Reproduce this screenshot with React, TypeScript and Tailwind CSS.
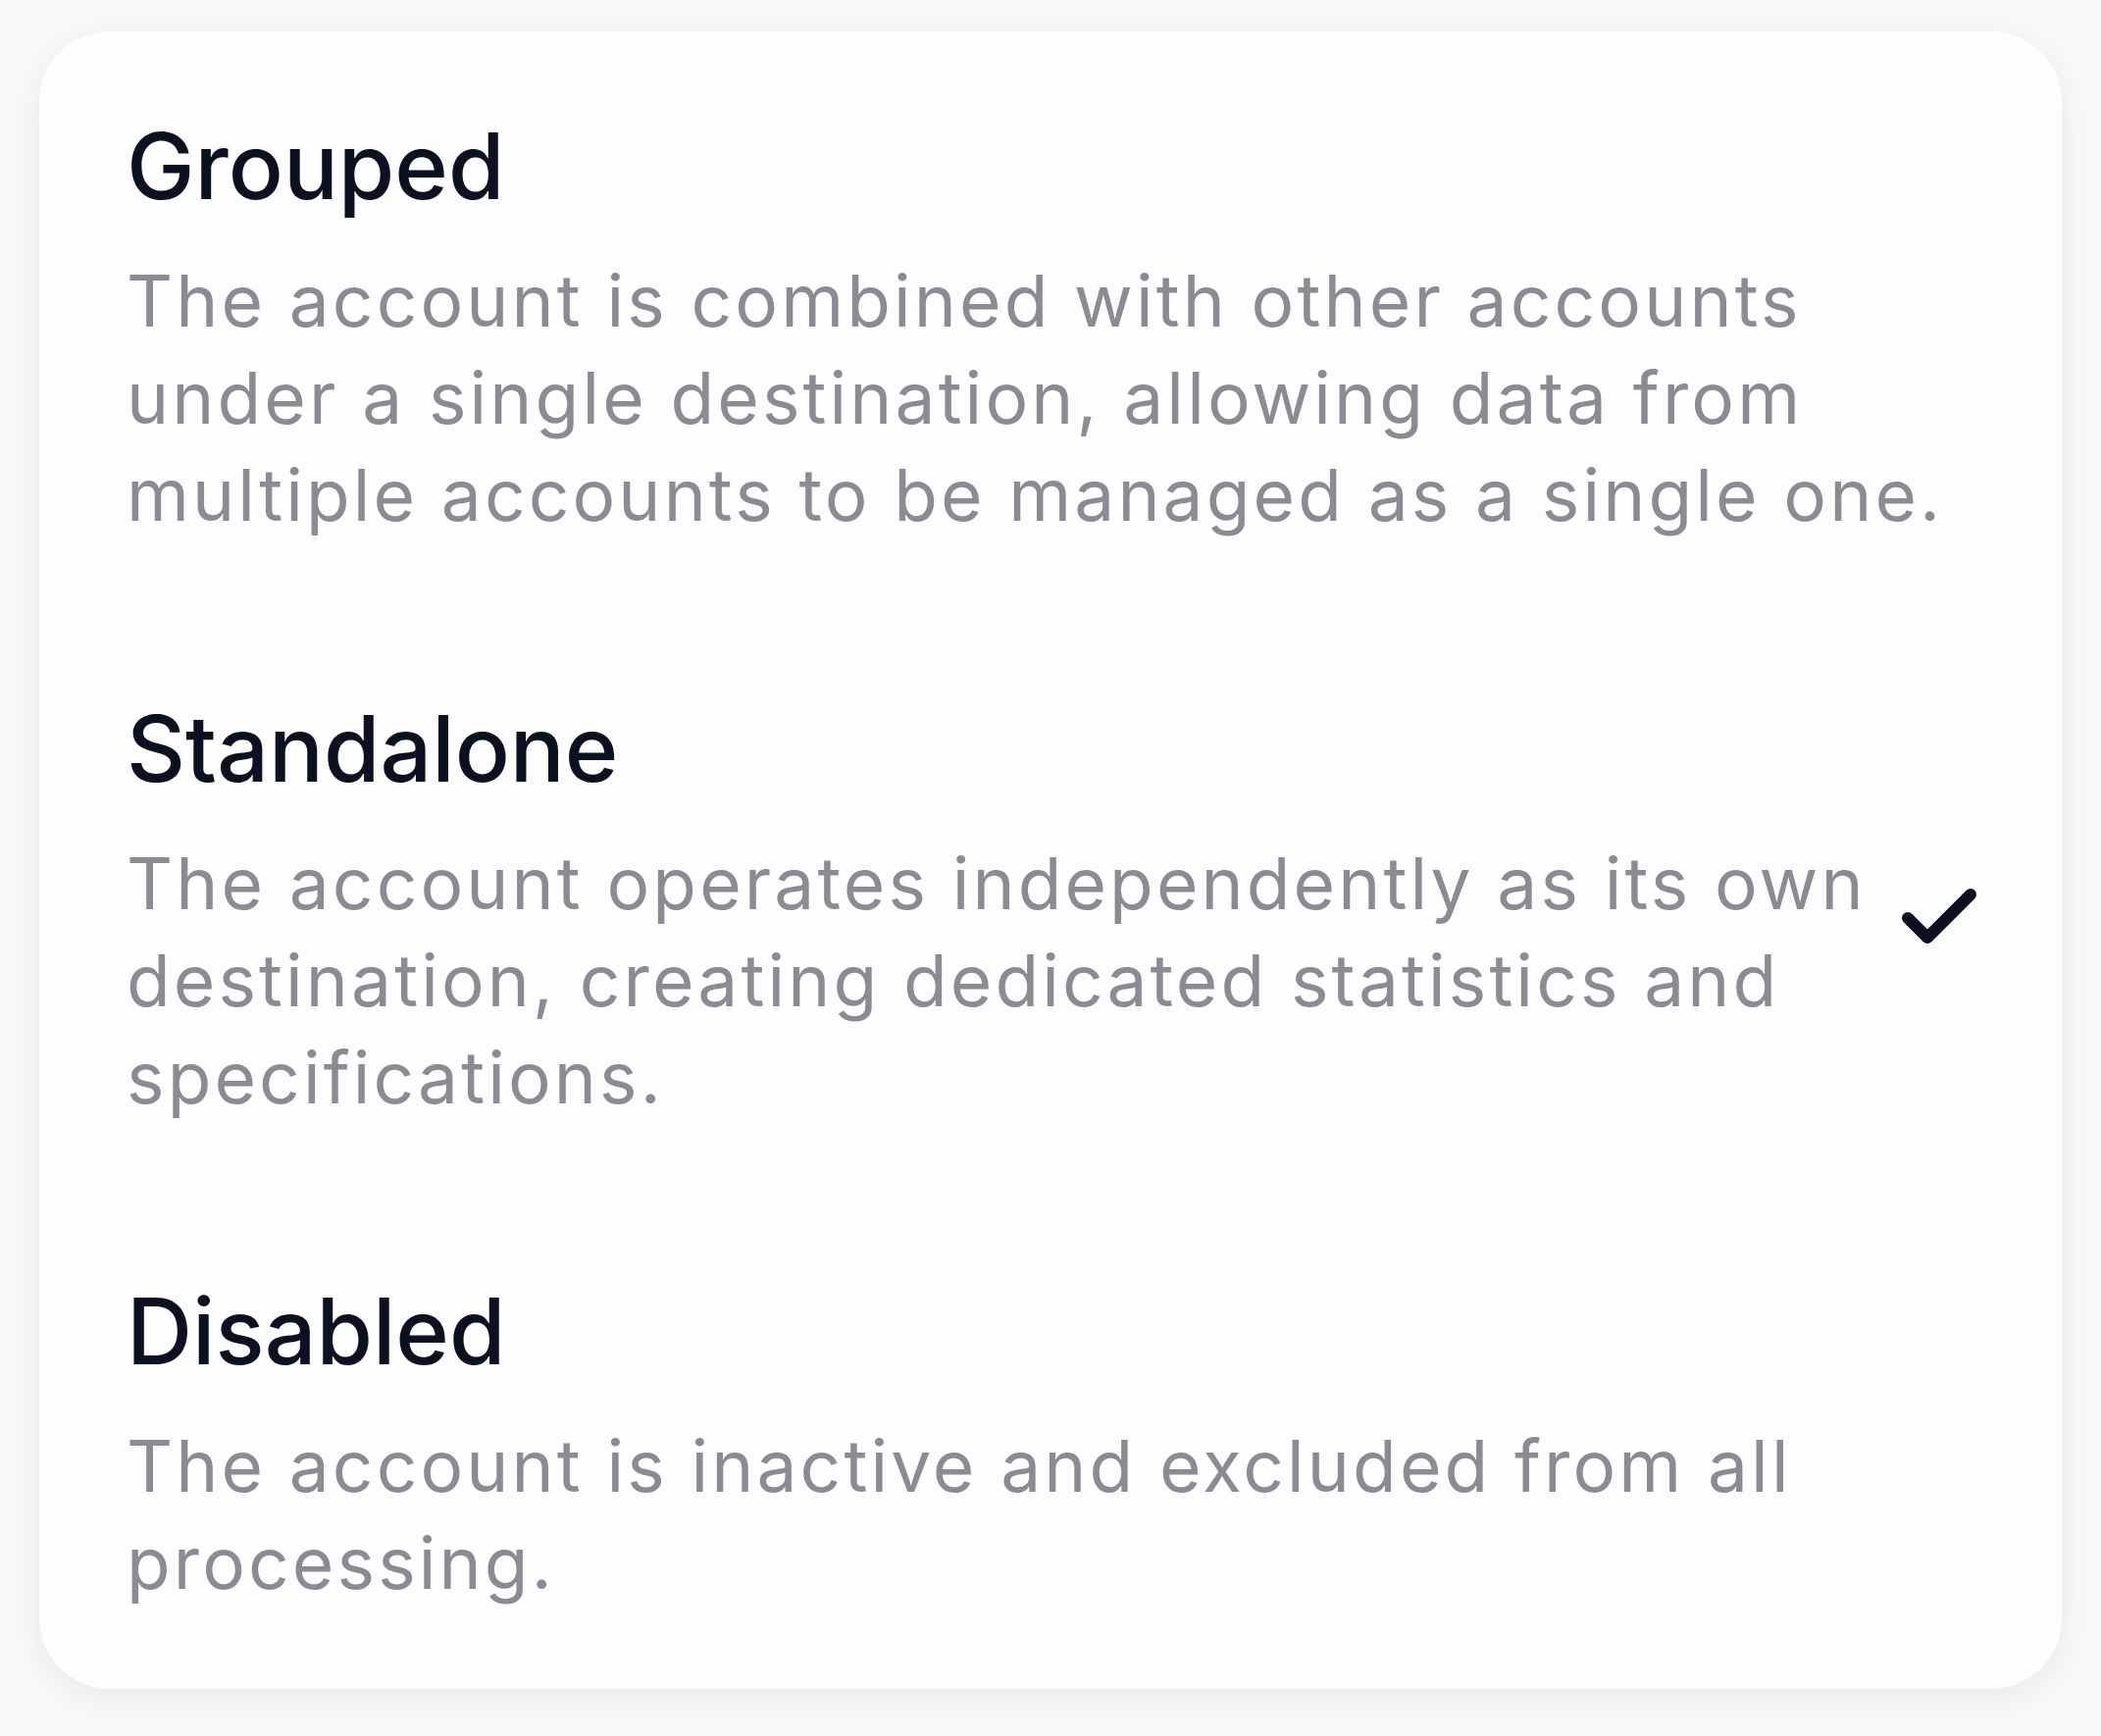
import React from "react";

const items = [
  {
    title: "Grouped",
    desc: "The account is combined with other accounts under a single destination, allowing data from multiple accounts to be managed as a single one.",
    selected: false,
  },
  {
    title: "Standalone",
    desc: "The account operates independently as its own destination, creating dedicated statistics and specifications.",
    selected: true,
  },
  {
    title: "Disabled",
    desc: "The account is inactive and excluded from all processing.",
    selected: false,
  },
];

function CheckIcon() {
  return (
    <svg
      width="96"
      height="96"
      viewBox="0 0 24 24"
      fill="none"
      stroke="#0b1120"
      strokeWidth="3"
      strokeLinecap="round"
      strokeLinejoin="round"
      className="shrink-0 mt-[20px]"
    >
      <path d="M20 6 9 17l-5-5" />
    </svg>
  );
}

export default function App() {
  return (
    <div
      className="w-[2142px] h-[1770px] bg-[#f9f9fa] pt-[32px] pl-[40px]"
      style={{ fontFamily: "Inter, 'Noto Sans', sans-serif" }}
    >
      <div className="w-[2062px] h-[1690px] rounded-[72px] bg-[#fdfcfe] shadow-[0_8px_36px_rgba(0,0,0,0.07)] pt-[77px] pl-[89px] pr-[77px] flex flex-col gap-[149px]">
        {items.map((it) => (
          <div key={it.title} className="flex items-center gap-[24px]">
            <div className="flex-1 flex flex-col gap-[28px]">
              <div className="text-[93px] leading-[120px] font-medium text-[#0b1120]">
                {it.title}
              </div>
              <div className="text-[73px] leading-[99px] tracking-[3.1px] text-[#8c8b94]">
                {it.desc}
              </div>
            </div>
            {it.selected && <CheckIcon />}
          </div>
        ))}
      </div>
    </div>
  );
}
